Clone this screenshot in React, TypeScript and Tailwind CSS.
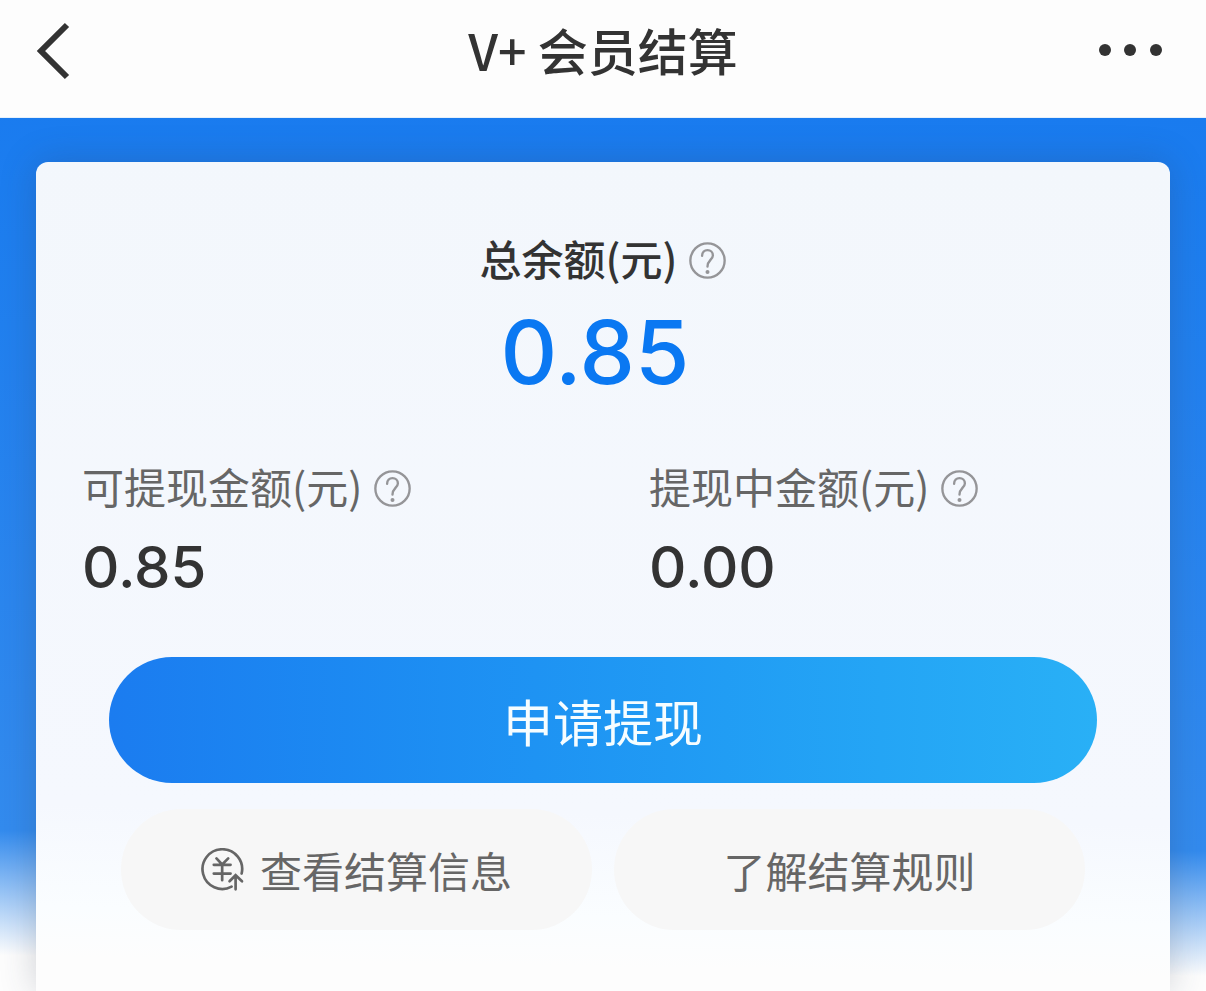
import type { ReactNode } from "react";

const actions = [
  { label: "查看结算信息", icon: true },
  { label: "了解结算规则", icon: false },
];

const amounts = [
  { label: "可提现金额(元)", value: "0.85" },
  { label: "提现中金额(元)", value: "0.00" },
];

function HelpButton({ label }: { label: string }) {
  return (
    <button type="button" aria-label={label} className="shrink-0">
      <svg viewBox="0 0 110 110" className="h-[37px] w-[37px]" fill="none" stroke="#959598" strokeWidth="7">
        <circle cx="55" cy="55" r="51" />
        <path d="M39 41C39 30 46 24 55 24S71 30 71 40C71 52 55 54 55 73" strokeLinecap="round" />
        <circle cx="55" cy="89" r="6" fill="#959598" stroke="none" />
      </svg>
    </button>
  );
}

function YuanIcon() {
  return (
    <svg
      viewBox="0 0 128 128"
      className="h-[43px] w-[43px] shrink-0"
      fill="none"
      stroke="#666666"
      strokeWidth="8"
      strokeLinecap="round"
      aria-hidden="true"
    >
      <path d="M121 76A59 59 0 1 0 91 115" />
      <path d="M46 31L63 49L81 31M38 50H88M38 76H88M63 50V96" />
      <path d="M103 123V82M85 99L103 81L122 99" />
    </svg>
  );
}

function AmountLabel({ children, help }: { children: ReactNode; help: string }) {
  return (
    <div className="flex items-center gap-3">
      <span className="pb-1 text-[42px] leading-[56px]">{children}</span>
      <HelpButton label={help} />
    </div>
  );
}

export default function App() {
  return (
    <div className="flex min-h-screen flex-col bg-[#fdfdfd] font-['Noto_Sans_CJK_SC',sans-serif] text-[#333333]">
      {/* Top bar */}
      <header className="relative z-10 grid h-[118px] grid-cols-[1fr_auto_1fr] items-center border-b border-[#e6f1fc] bg-[#fdfdfd] px-9 pb-4">
        <button type="button" aria-label="返回" className="justify-self-start">
          <svg viewBox="0 0 34 58" className="h-[58px] w-[34px]" fill="none" stroke="#333333" strokeWidth="6">
            <path d="M31 3L5 29L31 55" />
          </svg>
        </button>
        <h1 className="pb-1 text-[50px] leading-[56px] font-medium">V+ 会员结算</h1>
        <button type="button" aria-label="更多" className="justify-self-end">
          <svg viewBox="0 0 72 14" className="h-[14px] w-[72px]" fill="#333333">
            <circle cx="7" cy="6" r="6" />
            <circle cx="32" cy="6" r="6" />
            <circle cx="58" cy="6" r="6" />
          </svg>
        </button>
      </header>

      <main className="flex flex-1 flex-col bg-[linear-gradient(181deg,#197bef_0%,#338bee_82%,#fdfdfd_96%)] px-9 pt-11">
        {/* Balance card */}
        <section className="flex-1 rounded-t-xl bg-[linear-gradient(181deg,#f3f7fc_0%,#f5f8fe_78%,#fafdff_90%,#fdfdfd_96%)] pt-[68px] pb-[61px] shadow-[0_0_36px_rgba(50,60,80,0.24)]">
          <div className="flex flex-col items-center">
            <div className="font-medium">
              <AmountLabel help="总余额说明">总余额(元)</AmountLabel>
            </div>
            <p className="mt-4 pr-4 font-[Inter,sans-serif] text-[88px] leading-[92px] font-medium text-[#0a78f2]">
              0.85
            </p>
          </div>

          <div className="mt-[60px] grid grid-cols-2">
            {amounts.map((item) => (
              <div key={item.label} className="px-[46px]">
                <div className="text-[#666666]">
                  <AmountLabel help={item.label + "说明"}>{item.label}</AmountLabel>
                </div>
                <p className="mt-4 font-[Inter,sans-serif] text-[58px] leading-[66px] font-medium">{item.value}</p>
              </div>
            ))}
          </div>

          <div className="mt-[57px] px-[73px]">
            <button
              type="button"
              className="h-[126px] w-full rounded-full bg-linear-to-r from-[#1b7cf0] to-[#29b0f6] text-[50px] text-[#f6fdff]"
            >
              申请提现
            </button>
          </div>

          <div className="mt-[26px] grid grid-cols-2 gap-[22px] px-[85px]">
            {actions.map((action) => (
              <button
                key={action.label}
                type="button"
                className="flex h-[121px] items-center justify-center gap-4 rounded-full bg-[#f7f7f7] text-[42px] text-[#666666]"
              >
                {action.icon && <YuanIcon />}
                {action.label}
              </button>
            ))}
          </div>
        </section>
      </main>
    </div>
  );
}
